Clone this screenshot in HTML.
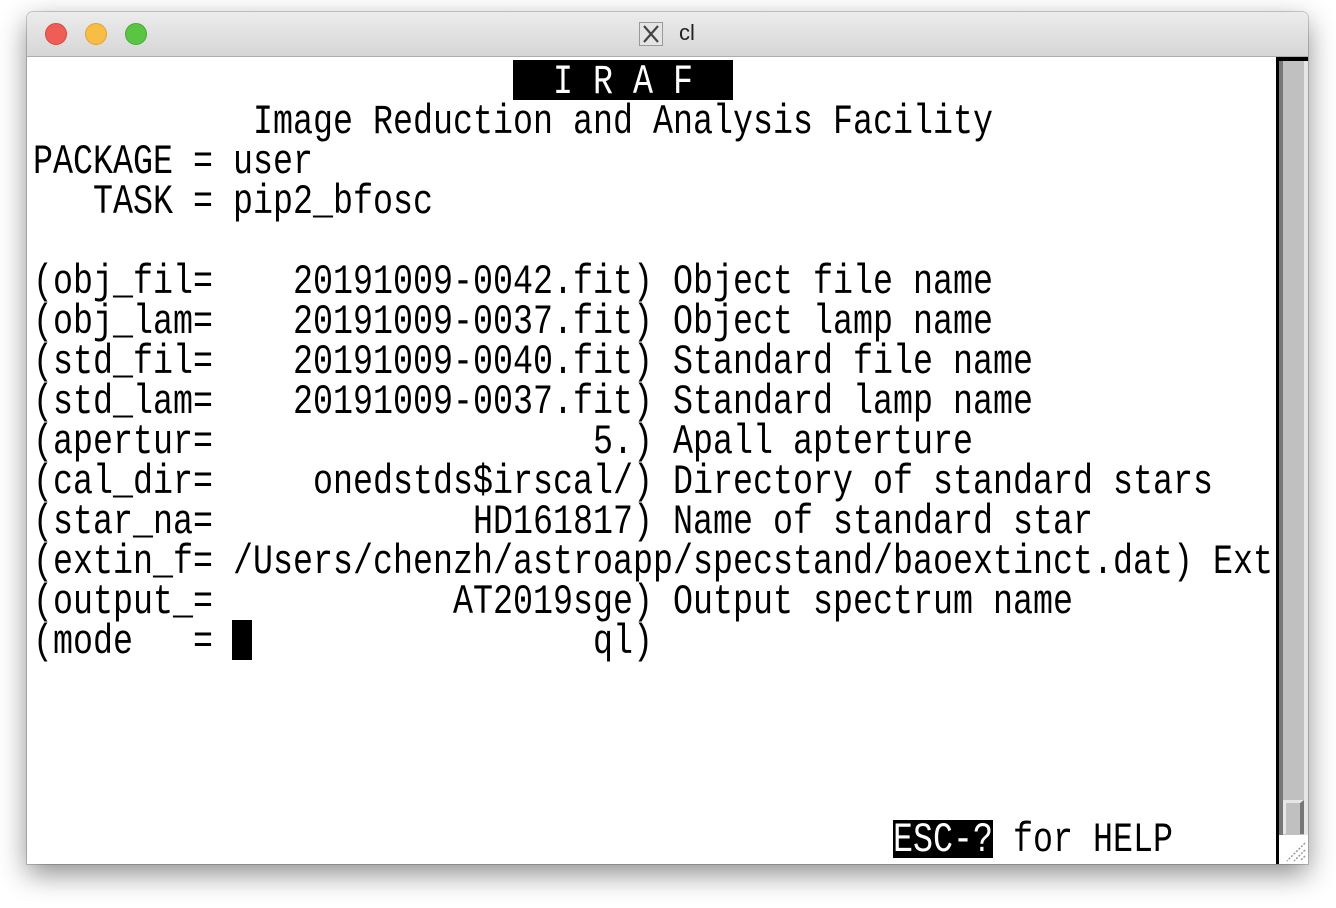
<!DOCTYPE html>
<html><head><meta charset="utf-8"><style>
html,body{margin:0;padding:0;background:#fff;}
body{width:1336px;height:908px;position:relative;overflow:hidden;}
.win{position:absolute;left:27px;top:12px;width:1281px;height:852px;background:#fff;border-radius:6px 6px 0 0;box-shadow:0 10px 28px rgba(0,0,0,0.45),0 0 0 1px rgba(0,0,0,0.18);overflow:hidden;}
.title{position:absolute;left:0;top:0;width:100%;height:44px;background:linear-gradient(#ececec,#d6d6d6);border-bottom:1px solid #adadad;}
.dot{position:absolute;top:11px;width:22px;height:22px;border-radius:50%;}
.tt{position:absolute;left:652px;top:8px;font:22px "Liberation Sans",sans-serif;color:#222;}
.xi{position:absolute;left:612px;top:10px;width:24px;height:24px;border:1px solid #999;background:#e4e4e4;box-sizing:border-box;}
.row{position:absolute;left:33px;height:40px;line-height:40px;white-space:pre;font-family:"Liberation Mono",monospace;font-size:33.33px;color:#000;}
.row span{display:inline-block;transform:translateY(3px) scaleY(1.25);}
.blk{position:absolute;background:#000;}
.w{color:#fff;}
</style></head><body>
<div class="win">
 <div class="title">
  <div class="dot" style="left:18px;background:#ee5e57;border:1px solid #d74740;box-sizing:border-box"></div>
  <div class="dot" style="left:58px;background:#f7bd45;border:1px solid #dea236;box-sizing:border-box"></div>
  <div class="dot" style="left:98px;background:#5ac443;border:1px solid #45a933;box-sizing:border-box"></div>
  <div class="xi"><svg width="22" height="22" viewBox="0 0 22 22"><path d="M4 3 L18 19 M18 3 L4 19" stroke="#444" stroke-width="2.2"/></svg></div>
  <div class="tt">cl</div>
 </div>
 <div style="position:absolute;left:1249px;top:45px;width:3px;height:807px;background:#000"></div>
 <div style="position:absolute;left:1252px;top:45px;width:29px;height:4px;background:#000"></div>
 <div style="position:absolute;left:1252px;top:49px;width:4px;height:774px;background:#777"></div>
 <div style="position:absolute;left:1256px;top:49px;width:21px;height:774px;background:#c0c0c0"></div>
 <div style="position:absolute;left:1277px;top:49px;width:4px;height:774px;background:#e6e6e6"></div>
 <div style="position:absolute;left:1256px;top:788px;width:21px;height:34px;background:#c0c0c0;border-top:3px solid #e6e6e6;border-left:3px solid #e6e6e6;border-right:4px solid #777;box-sizing:border-box"></div>
 <div style="position:absolute;left:1252px;top:823px;width:29px;height:29px;background:#fff"><svg width="29" height="29"><path d="M26 8 L8 26 M26 15 L15 26 M26 21 L21 26" stroke="#999" stroke-width="1.5" stroke-dasharray="2 1.5"/></svg></div>
</div>
<div class="blk" style="left:513px;top:60px;width:220px;height:40px"></div>
<div class="blk" style="left:893px;top:820px;width:100px;height:38px"></div>
<div class="blk" style="left:232px;top:620px;width:20px;height:40px"></div>
<div class="row" style="top:60px"><span class="w">                          I R A F</span></div>
<div class="row" style="top:100px"><span>           Image Reduction and Analysis Facility</span></div>
<div class="row" style="top:140px"><span>PACKAGE = user</span></div>
<div class="row" style="top:180px"><span>   TASK = pip2_bfosc</span></div>
<div class="row" style="top:260px"><span>(obj_fil=    20191009-0042.fit) Object file name</span></div>
<div class="row" style="top:300px"><span>(obj_lam=    20191009-0037.fit) Object lamp name</span></div>
<div class="row" style="top:340px"><span>(std_fil=    20191009-0040.fit) Standard file name</span></div>
<div class="row" style="top:380px"><span>(std_lam=    20191009-0037.fit) Standard lamp name</span></div>
<div class="row" style="top:420px"><span>(apertur=                   5.) Apall apterture</span></div>
<div class="row" style="top:460px"><span>(cal_dir=     onedstds$irscal/) Directory of standard stars</span></div>
<div class="row" style="top:500px"><span>(star_na=             HD161817) Name of standard star</span></div>
<div class="row" style="top:540px"><span>(extin_f= /Users/chenzh/astroapp/specstand/baoextinct.dat) Ext</span></div>
<div class="row" style="top:580px"><span>(output_=            AT2019sge) Output spectrum name</span></div>
<div class="row" style="top:620px"><span>(mode   =                   ql)</span></div>
<div class="row" style="top:818px;left:893px"><span class="w">ESC-?</span></div>
<div class="row" style="top:818px;left:993px"><span> for HELP</span></div>
</body></html>
